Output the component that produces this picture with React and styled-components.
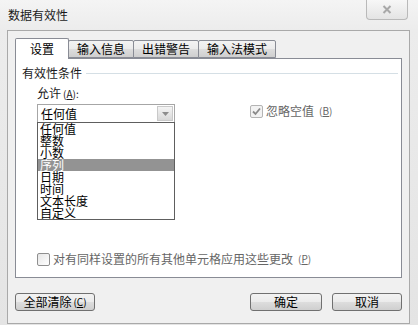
import React from "react";
import styled, { createGlobalStyle } from "styled-components";

const GlobalStyle = createGlobalStyle`
  html, body {
    margin: 0;
    padding: 0;
    background: #e6e6e6;
  }
  body {
    font-family: "Noto Sans CJK SC", "Liberation Sans", sans-serif;
    font-size: 12px;
    color: #000;
  }
`;

const Window = styled.div`
  width: 418px;
  height: 325px;
  display: flex;
  flex-direction: column;
  background: linear-gradient(to bottom, #f4f4f4 0, #ececec 30px, #e4e4e4 100%);
  overflow: hidden;
`;

const TitleBar = styled.div`
  height: 30px;
  display: flex;
  justify-content: space-between;
  align-items: flex-start;
  flex-shrink: 0;
`;

const Title = styled.div`
  padding: 8px 0 0 8px;
  line-height: 14px;
  font-size: 12px;
  color: #1a1a1a;
`;

const CloseBtn = styled.div`
  width: 42px;
  height: 20px;
  margin-right: 10px;
  box-sizing: border-box;
  border: 1px solid #b9b9b9;
  border-top: none;
  border-radius: 0 0 4px 4px;
  background: linear-gradient(#f7f7f7, #e4e4e4);
  display: flex;
  align-items: center;
  justify-content: center;
`;

const Body = styled.div`
  flex: 1;
  margin: 0 8px 1px 7px;
  border: 1px solid #a9a9a9;
  background: #f0f0f0;
  padding: 7px 7px 0 7px;
  display: flex;
  flex-direction: column;
`;

const TabStrip = styled.div`
  display: flex;
  align-items: flex-end;
  height: 20px;
  position: relative;
  z-index: 1;
`;

const Tab = styled.div`
  box-sizing: border-box;
  height: ${(p) => (p.$active ? "21px" : "18px")};
  margin-bottom: ${(p) => (p.$active ? "-1px" : "0")};
  padding: 0 ${(p) => (p.$active ? "14px" : "8px")};
  margin-right: -1px;
  border: 1px solid #898c95;
  border-bottom: ${(p) => (p.$active ? "none" : "1px solid #898c95")};
  border-radius: 2px 2px 0 0;
  background: ${(p) =>
    p.$active ? "#fff" : "linear-gradient(#f3f3f3, #ebebeb 50%, #dddddd 51%, #cfcfcf)"};
  line-height: ${(p) => (p.$active ? "19px" : "16px")};
  font-size: 12px;
  white-space: nowrap;
`;

const Panel = styled.div`
  height: 220px;
  box-sizing: border-box;
  border: 1px solid #898c95;
  background: #fff;
  padding: 7px 3px 0 6px;
  display: flex;
  flex-direction: column;
`;

const GroupHeader = styled.div`
  display: flex;
  align-items: center;
  gap: 4px;
  line-height: 14px;
  color: #1a1a1a;
`;

const GroupLine = styled.div`
  flex: 1;
  height: 0;
  border-top: 1px solid #d5dfe5;
`;

const Section = styled.div`
  margin-left: 15px;
  display: flex;
  flex-direction: column;
`;

const FieldLabel = styled.div`
  margin-top: 6px;
  line-height: 14px;
  color: #1a1a1a;
`;

const Mnemonic = styled.span`
  font-size: 10px;
  margin-left: 2px;
  u {
    text-decoration-thickness: 1px;
  }
`;

const FieldRow = styled.div`
  margin-top: 3px;
  display: flex;
  align-items: flex-start;
`;

const Select = styled.div`
  position: relative;
  width: 138px;
  height: 19px;
  box-sizing: border-box;
  border: 1px solid #a6a6a6;
  background: #fff;
  display: flex;
  align-items: center;
  padding-left: 3px;
  line-height: 14px;
`;

const SelectValue = styled.span`
  flex: 1;
`;

const ArrowBtn = styled.div`
  width: 16px;
  height: 15px;
  margin-right: 1px;
  box-sizing: border-box;
  border: 1px solid #c9c9c9;
  background: linear-gradient(#f4f4f4, #e6e6e6 50%, #d8d8d8);
  display: flex;
  align-items: center;
  justify-content: center;
`;

const ListPopup = styled.div`
  position: absolute;
  top: 100%;
  left: -1px;
  width: 138px;
  box-sizing: border-box;
  border: 1px solid #5e5e5e;
  background: #fff;
  display: flex;
  flex-direction: column;
`;

const ListItem = styled.div`
  height: 12px;
  line-height: 12px;
  padding-left: 2px;
  font-size: 12px;
  background: ${(p) => (p.$selected ? "#939393" : "transparent")};
  color: ${(p) => (p.$selected ? "#fff" : "#000")};
  overflow: visible;
  white-space: nowrap;
`;

const CheckOption = styled.label`
  display: flex;
  align-items: center;
  gap: 3px;
  line-height: 14px;
  color: ${(p) => (p.$disabled ? "#666" : "#1a1a1a")};
  margin-left: ${(p) => p.$indent || 0}px;
`;

const Box = styled.span`
  width: 13px;
  height: 13px;
  box-sizing: border-box;
  border: 1px solid ${(p) => (p.$disabled ? "#b4b4b4" : "#8f8f8f")};
  border-radius: 2px;
  background: ${(p) => (p.$disabled ? "#f2f2f2" : "linear-gradient(135deg, #e6e6e6, #fff)")};
  display: flex;
  align-items: center;
  justify-content: center;
  flex-shrink: 0;
`;

const BottomOption = styled.div`
  margin-top: auto;
  margin-bottom: 11px;
  margin-left: 15px;
`;

const ButtonRow = styled.div`
  margin-top: 15px;
  display: flex;
  justify-content: space-between;
`;

const ButtonGroup = styled.div`
  display: flex;
  gap: 10px;
`;

const Button = styled.button`
  width: ${(p) => p.$w}px;
  height: 18px;
  padding: 0;
  box-sizing: border-box;
  border: 1px solid #707070;
  border-radius: 3px;
  background: linear-gradient(#f2f2f2, #ebebeb 50%, #dddddd 51%, #cfcfcf);
  font-family: inherit;
  font-size: 12px;
  line-height: 14px;
  color: #000;
  display: flex;
  align-items: center;
  justify-content: center;
`;

const options = ["任何值", "整数", "小数", "序列", "日期", "时间", "文本长度", "自定义"];
const tabs = ["设置", "输入信息", "出错警告", "输入法模式"];

const Check = () => (
  <svg width="9" height="9" viewBox="0 0 9 9">
    <path d="M1 4.5 L3.5 7 L8 1.5" stroke="#8a8a8a" strokeWidth="1.8" fill="none" />
  </svg>
);

export default function App() {
  return (
    <>
      <GlobalStyle />
      <Window>
        <TitleBar>
          <Title>数据有效性</Title>
          <CloseBtn>
            <svg width="10" height="9" viewBox="0 0 10 9">
              <path d="M1.5 1 L8.5 8 M8.5 1 L1.5 8" stroke="#a8a8a8" strokeWidth="2" />
            </svg>
          </CloseBtn>
        </TitleBar>
        <Body>
          <TabStrip>
            {tabs.map((t, i) => (
              <Tab key={t} $active={i === 0}>
                {t}
              </Tab>
            ))}
          </TabStrip>
          <Panel>
            <GroupHeader>
              有效性条件
              <GroupLine />
            </GroupHeader>
            <Section>
              <FieldLabel>
                允许
                <Mnemonic>
                  (<u>A</u>):
                </Mnemonic>
              </FieldLabel>
              <FieldRow>
                <Select>
                  <SelectValue>任何值</SelectValue>
                  <ArrowBtn>
                    <svg width="7" height="4" viewBox="0 0 7 4">
                      <path d="M0 0 L7 0 L3.5 4 Z" fill="#8c8c8c" />
                    </svg>
                  </ArrowBtn>
                  <ListPopup>
                    {options.map((o, i) => (
                      <ListItem key={o} $selected={i === 3}>
                        {o}
                      </ListItem>
                    ))}
                  </ListPopup>
                </Select>
                <CheckOption $disabled $indent={75}>
                  <Box $disabled>
                    <Check />
                  </Box>
                  忽略空值
                  <Mnemonic>
                    (<u>B</u>)
                  </Mnemonic>
                </CheckOption>
              </FieldRow>
            </Section>
            <BottomOption>
              <CheckOption $disabled>
                <Box />
                对有同样设置的所有其他单元格应用这些更改
                <Mnemonic>
                  (<u>P</u>)
                </Mnemonic>
              </CheckOption>
            </BottomOption>
          </Panel>
          <ButtonRow>
            <Button $w={80}>
              全部清除
              <Mnemonic>
                (<u>C</u>)
              </Mnemonic>
            </Button>
            <ButtonGroup>
              <Button $w={72}>确定</Button>
              <Button $w={70}>取消</Button>
            </ButtonGroup>
          </ButtonRow>
        </Body>
      </Window>
    </>
  );
}
